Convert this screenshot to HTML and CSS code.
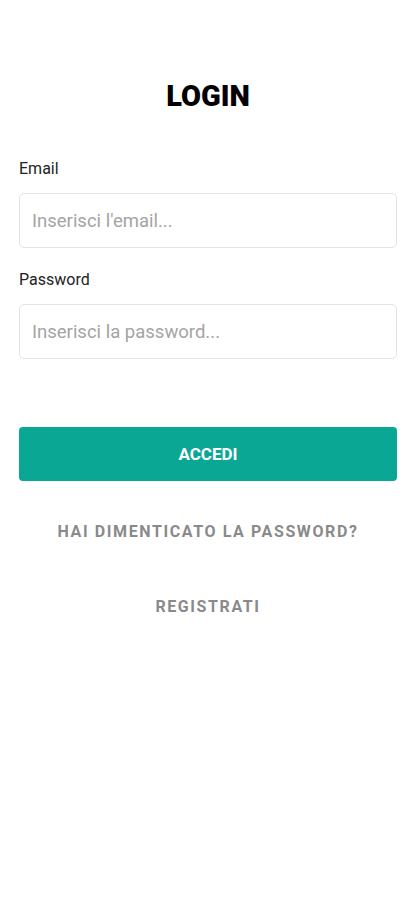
FILE: index.html
```html
<!DOCTYPE html>
<html lang="it">
<head>
<meta charset="utf-8">
<title>Login</title>
<link rel="stylesheet" href="styles.css">
</head>
<body>
<main class="page">
  <h1 class="title">LOGIN</h1>
  <form class="form">
    <label class="field">
      <span class="label">Email</span>
      <input class="input" type="email" placeholder="Inserisci l'email...">
    </label>
    <label class="field">
      <span class="label">Password</span>
      <input class="input" type="password" placeholder="Inserisci la password...">
    </label>
    <button class="btn" type="button">ACCEDI</button>
  </form>
  <a class="link link-forgot" href="#">HAI DIMENTICATO LA PASSWORD?</a>
  <a class="link link-register" href="#">REGISTRATI</a>
</main>
</body>
</html>
```
FILE: styles.css
```css
* { box-sizing: border-box; }
html, body { margin: 0; padding: 0; background: #fff; }
body { font-family: Roboto, "Liberation Sans", Arial, sans-serif; }
.page {
  display: flex;
  flex-direction: column;
  align-items: stretch;
  padding: 79px 18px 0 19px;
}
.title {
  margin: 0;
  text-align: center;
  font-size: 29px;
  font-weight: 900;
  line-height: 34px;
  color: #000;
}
.form {
  display: flex;
  flex-direction: column;
  margin-top: 46px;
}
.field {
  display: flex;
  flex-direction: column;
  margin-bottom: 22px;
}
.label {
  font-size: 16px;
  line-height: 20px;
  color: #222;
  margin-bottom: 14px;
}
.input {
  height: 55px;
  border: 1px solid #e4e4e4;
  border-radius: 5px;
  padding: 0 12px;
  font-family: inherit;
  font-size: 18.5px;
  color: #333;
  background: #fff;
  outline: none;
}
.input::placeholder { color: #a4a4a4; }
.btn {
  margin-top: 46px;
  height: 54px;
  border: none;
  border-radius: 4px;
  background: #0aa894;
  color: #fff;
  font-family: inherit;
  font-size: 17px;
  font-weight: 700;
  letter-spacing: 0;
}
.link {
  align-self: center;
  text-decoration: none;
  color: #8a8a8a;
  font-size: 16px;
  font-weight: 700;
  letter-spacing: 1.6px;
  line-height: 20px;
}
.link-forgot { margin-top: 41px; }
.link-register { margin-top: 55px; }
```
